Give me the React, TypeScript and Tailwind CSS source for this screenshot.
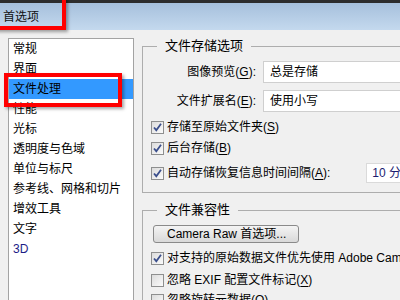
import type { ReactNode } from "react";

const navItems = [
  "常规",
  "界面",
  "文件处理",
  "性能",
  "光标",
  "透明度与色域",
  "单位与标尺",
  "参考线、网格和切片",
  "增效工具",
  "文字",
  "3D",
];

function CheckBox({ checked }: { checked?: boolean }) {
  return (
    <div className="relative h-[13px] w-[13px] shrink-0 border border-[#8e8f8f] bg-linear-to-br from-[#dcdcdc] to-[#fbfbfb]">
      {checked && (
        <svg viewBox="0 0 11 11" className="absolute left-0 top-0 h-[11px] w-[11px]">
          <path d="M2 5.5 L4.3 8.2 L9 1.8" fill="none" stroke="#3b4f8c" strokeWidth="1.8" />
        </svg>
      )}
    </div>
  );
}

function CheckRow({ checked, children, className }: { checked?: boolean; children: ReactNode; className?: string }) {
  return (
    <div className={`ml-[8px] flex h-[20px] items-center gap-[3px] whitespace-nowrap ${className ?? ""}`}>
      <CheckBox checked={checked} />
      <span>{children}</span>
    </div>
  );
}

export default function App() {
  return (
    <div className="relative h-[300px] w-[400px] overflow-hidden bg-[#f0f0f0] font-['Liberation_Sans','Noto_Sans_CJK_SC',sans-serif] text-[12px] text-black">
      <div className="h-[3px] bg-[#2d2d2d]" />
      <div className="flex h-[27px] items-center bg-linear-to-b from-[#a6c0dc] to-[#c4d9ee] pl-[3px] text-[12px] text-[#111]">
        首选项
      </div>

      <div className="flex pl-[8px] pt-[8px]">
        {/* left nav list */}
        <div className="h-[300px] w-[126px] shrink-0 border border-[#a3a3a3] bg-white">
          {navItems.map((item) => (
            <div
              key={item}
              className={`h-[20px] whitespace-nowrap pl-[4px] leading-[20px] ${
                item === "文件处理" ? "bg-[#3399ff]" : ""
              } ${item === "3D" ? "text-[#1c1c86]" : ""}`}
            >
              {item}
            </div>
          ))}
        </div>

        {/* right settings */}
        <div className="ml-[8px] w-[330px] shrink-0 pt-px">
          <fieldset className="border border-[#adadad] pb-[8px]">
            <legend className="ml-[14px] px-[8px] text-[13px] leading-[14px]">文件存储选项</legend>
            <div className="mt-[8px] flex items-center">
              <div className="w-[113px] text-right">
                图像预览(<u className="underline-offset-2">G</u>):
              </div>
              <div className="ml-[7px] flex h-[22px] w-[200px] items-center border border-[#cfcfcf] bg-white pl-[6px]">
                总是存储
              </div>
            </div>
            <div className="mt-[7px] flex items-center">
              <div className="w-[113px] text-right">
                文件扩展名(<u className="underline-offset-2">E</u>):
              </div>
              <div className="ml-[7px] flex h-[22px] w-[200px] items-center border border-[#cfcfcf] bg-white pl-[6px]">
                使用小写
              </div>
            </div>
            <CheckRow checked className="mt-[5px]">
              存储至原始文件夹(<u className="underline-offset-2">S</u>)
            </CheckRow>
            <CheckRow checked className="mt-px">
              后台存储(<u className="underline-offset-2">B</u>)
            </CheckRow>
            <div className="mt-[4px] flex h-[22px] items-center">
              <CheckRow checked>
                自动存储恢复信息时间间隔(<u className="underline-offset-2">A</u>):
              </CheckRow>
              <div className="ml-[36px] flex h-[20px] w-[80px] items-center border border-[#dadada] bg-white pl-[5px] text-[#1c1c70]">
                10 分钟
              </div>
            </div>
          </fieldset>

          <fieldset className="mt-[10px] border border-[#adadad]">
            <legend className="ml-[14px] px-[8px] text-[13px] leading-[14px]">文件兼容性</legend>
            <button className="ml-[10px] mt-[8px] flex h-[18px] w-[146px] items-center rounded-[3px] border border-[#8a8a8a] bg-linear-to-b from-[#f4f4f4] to-[#d9d9d9] pl-[13px] text-[12px]">
              Camera Raw 首选项...
            </button>
            <CheckRow checked className="mt-[5px]">
              对支持的原始数据文件优先使用 Adobe Camera Raw(<u className="underline-offset-2">R</u>)
            </CheckRow>
            <CheckRow className="mt-[2px]">
              忽略 EXIF 配置文件标记(<u className="underline-offset-2">X</u>)
            </CheckRow>
            <CheckRow>
              忽略旋转元数据(<u className="underline-offset-2">O</u>)
            </CheckRow>
          </fieldset>
        </div>
      </div>

      {/* annotation boxes */}
      <div className="absolute left-[-10px] top-[-10px] h-[40px] w-[76px] border-4 border-[#ff0000] shadow-[2px_2px_3px_rgba(0,0,0,0.35)]" />
      <div className="absolute left-[4px] top-[73px] h-[34px] w-[118px] border-4 border-[#ff0000] shadow-[2px_2px_3px_rgba(0,0,0,0.35)]" />
    </div>
  );
}
